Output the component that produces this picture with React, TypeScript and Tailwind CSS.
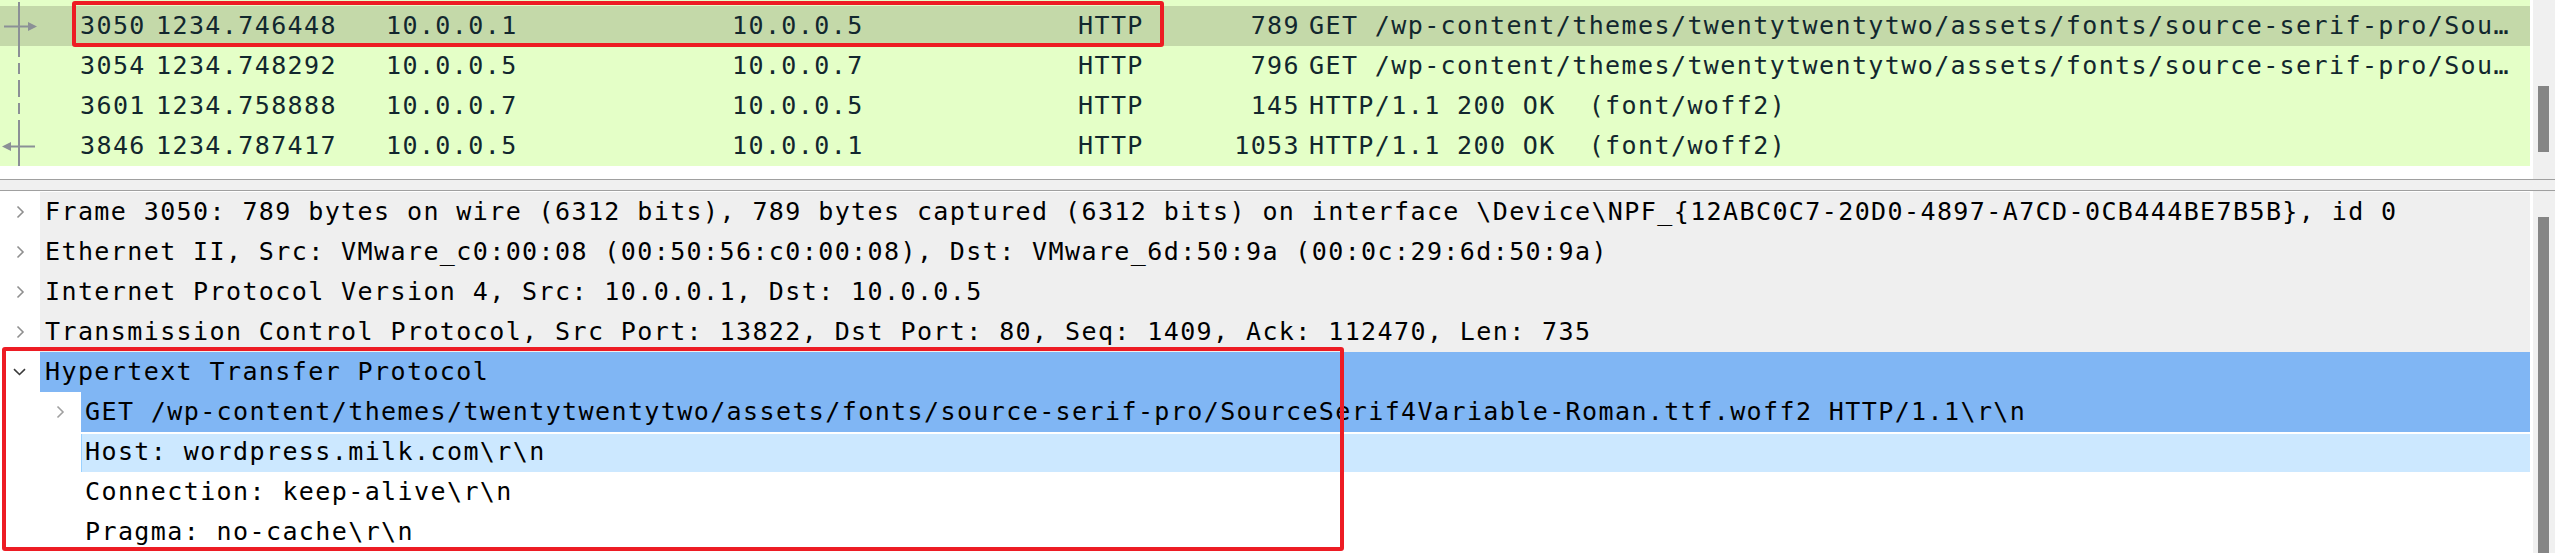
import React from "react";

const mono = "font-['DejaVu_Sans_Mono',monospace] text-[25px] tracking-[1.4px] leading-[40px] whitespace-pre";

type Packet = {
  no: string;
  time: string;
  src: string;
  dst: string;
  proto: string;
  len: string;
  info: string;
  selected?: boolean;
  mark: "req" | "mid" | "resp";
};

const packets: Packet[] = [
  {
    no: "3050",
    time: "1234.746448",
    src: "10.0.0.1",
    dst: "10.0.0.5",
    proto: "HTTP",
    len: "789",
    info: "GET /wp-content/themes/twentytwentytwo/assets/fonts/source-serif-pro/Sou…",
    selected: true,
    mark: "req",
  },
  {
    no: "3054",
    time: "1234.748292",
    src: "10.0.0.5",
    dst: "10.0.0.7",
    proto: "HTTP",
    len: "796",
    info: "GET /wp-content/themes/twentytwentytwo/assets/fonts/source-serif-pro/Sou…",
    mark: "mid",
  },
  {
    no: "3601",
    time: "1234.758888",
    src: "10.0.0.7",
    dst: "10.0.0.5",
    proto: "HTTP",
    len: "145",
    info: "HTTP/1.1 200 OK  (font/woff2)",
    mark: "mid",
  },
  {
    no: "3846",
    time: "1234.787417",
    src: "10.0.0.5",
    dst: "10.0.0.1",
    proto: "HTTP",
    len: "1053",
    info: "HTTP/1.1 200 OK  (font/woff2)",
    mark: "resp",
  },
];

const LINE = "#8b9096";

const RelMark = ({ mark }: { mark: Packet["mark"] }) => (
  <svg width="40" height="40" viewBox="0 0 40 40" className="shrink-0">
    {mark === "mid" ? (
      <line x1="19" y1="0" x2="19" y2="40" stroke={LINE} strokeWidth="2" strokeDasharray="11 6" />
    ) : (
      <line x1="19" y1="0" x2="19" y2="40" stroke={LINE} strokeWidth="2" />
    )}
    {mark === "req" && (
      <>
        <line x1="4" y1="20.5" x2="30" y2="20.5" stroke={LINE} strokeWidth="2" />
        <polygon points="28,16 37,20.5 28,25" fill={LINE} />
      </>
    )}
    {mark === "resp" && (
      <>
        <line x1="10" y1="20.5" x2="35" y2="20.5" stroke={LINE} strokeWidth="2" />
        <polygon points="11,16 2,20.5 11,25" fill={LINE} />
      </>
    )}
  </svg>
);

const ChevronRight = ({ color = "#8f8f8f" }: { color?: string }) => (
  <svg width="9" height="14" viewBox="0 0 9 14" className="shrink-0">
    <polyline points="1.5,1.5 7,7 1.5,12.5" fill="none" stroke={color} strokeWidth="1.6" />
  </svg>
);

const ChevronDown = () => (
  <svg width="13" height="8" viewBox="0 0 13 8" className="shrink-0">
    <polyline points="1,1.2 6.5,6.5 12,1.2" fill="none" stroke="#3a3a3a" strokeWidth="1.6" />
  </svg>
);

const Track = ({ thumbTop, thumbHeight }: { thumbTop: string; thumbHeight: string }) => (
  <div className="w-[25px] shrink-0 bg-[#f0f0f0] border-l-[3px] border-white">
    <div className={`ml-[5px] w-[11px] bg-[#858585] ${thumbTop} ${thumbHeight}`} />
  </div>
);

const PacketRow = ({ p }: { p: Packet }) => (
  <div
    className={`flex h-[40px] items-center text-[#12272e] ${mono} ${
      p.selected ? "bg-[#c4d9a9]" : "bg-[#e4ffc7]"
    }`}
  >
    <RelMark mark={p.mark} />
    <span className="w-[116px] shrink-0 pl-[40px]">{p.no}</span>
    <span className="w-[230px] shrink-0">{p.time}</span>
    <span className="w-[346px] shrink-0">{p.src}</span>
    <span className="w-[346px] shrink-0">{p.dst}</span>
    <span className="w-[90px] shrink-0">{p.proto}</span>
    <span className="w-[132px] shrink-0 text-right">{p.len}</span>
    <span className="flex-1 pl-[9px] overflow-hidden">{p.info}</span>
  </div>
);

const TopRow = ({ text }: { text: string }) => (
  <div className={`flex h-[40px] items-center ${mono}`}>
    <div className="flex w-[40px] shrink-0 pl-[16px]">
      <ChevronRight />
    </div>
    <div className="flex-1 h-full bg-[#efefef] pl-[5px] text-black">{text}</div>
  </div>
);

export default function App() {
  return (
    <div className="relative w-[2555px] h-[553px] overflow-hidden bg-white">
      {/* packet list */}
      <div className="flex h-[179px]">
        <div className="flex flex-1 flex-col bg-white">
          <div className="h-[6px] bg-[#e4ffc7]">
            <svg width="40" height="6" viewBox="0 0 40 6">
              <line x1="19" y1="2" x2="19" y2="6" stroke={LINE} strokeWidth="2" />
            </svg>
          </div>
          {packets.map((p) => (
            <PacketRow key={p.no} p={p} />
          ))}
        </div>
        <Track thumbTop="mt-[86px]" thumbHeight="h-[66px]" />
      </div>

      {/* splitter */}
      <div className="h-[12px] border-y border-[#a0a0a0] bg-[#f0f0f0]" />

      {/* packet details */}
      <div className="flex h-[362px]">
        <div className="flex flex-1 flex-col pt-[1px]">
          <TopRow text="Frame 3050: 789 bytes on wire (6312 bits), 789 bytes captured (6312 bits) on interface \Device\NPF_{12ABC0C7-20D0-4897-A7CD-0CB444BE7B5B}, id 0" />
          <TopRow text="Ethernet II, Src: VMware_c0:00:08 (00:50:56:c0:00:08), Dst: VMware_6d:50:9a (00:0c:29:6d:50:9a)" />
          <TopRow text="Internet Protocol Version 4, Src: 10.0.0.1, Dst: 10.0.0.5" />
          <TopRow text="Transmission Control Protocol, Src Port: 13822, Dst Port: 80, Seq: 1409, Ack: 112470, Len: 735" />

          <div className={`flex h-[40px] items-center ${mono}`}>
            <div className="flex w-[40px] shrink-0 pl-[13px]">
              <ChevronDown />
            </div>
            <div className="flex-1 h-full bg-[#80b6f4] pl-[5px] text-black">Hypertext Transfer Protocol</div>
          </div>

          <div className={`flex h-[40px] items-center ${mono}`}>
            <div className="flex w-[81px] shrink-0 pl-[56px]">
              <ChevronRight color="#a0a0a0" />
            </div>
            <div className="flex-1 h-full bg-[#80b6f4] pl-[4px] text-black">
              GET /wp-content/themes/twentytwentytwo/assets/fonts/source-serif-pro/SourceSerif4Variable-Roman.ttf.woff2 HTTP/1.1\r\n
            </div>
          </div>

          <div className={`flex h-[40px] items-center ${mono}`}>
            <div className="w-[81px] shrink-0" />
            <div className="flex-1 h-[38px] mt-[2px] bg-[#cce8ff] border-l border-[#99d1ff] pl-[3px] leading-[36px] text-black">
              Host: wordpress.milk.com\r\n
            </div>
          </div>

          <div className={`flex h-[40px] items-center ${mono}`}>
            <div className="w-[81px] shrink-0" />
            <div className="flex-1 pl-[4px] text-black">Connection: keep-alive\r\n</div>
          </div>

          <div className={`flex h-[40px] items-center ${mono}`}>
            <div className="w-[81px] shrink-0" />
            <div className="flex-1 pl-[4px] text-black">Pragma: no-cache\r\n</div>
          </div>
        </div>
        <Track thumbTop="mt-[26px]" thumbHeight="h-[340px]" />
      </div>

      {/* annotation boxes */}
      <div className="pointer-events-none absolute left-[72px] top-[1px] h-[46px] w-[1092px] rounded-[3px] border-4 border-[#ed1c24]" />
      <div className="pointer-events-none absolute left-[2px] top-[347px] h-[204px] w-[1342px] rounded-[3px] border-4 border-[#ed1c24]" />
    </div>
  );
}
